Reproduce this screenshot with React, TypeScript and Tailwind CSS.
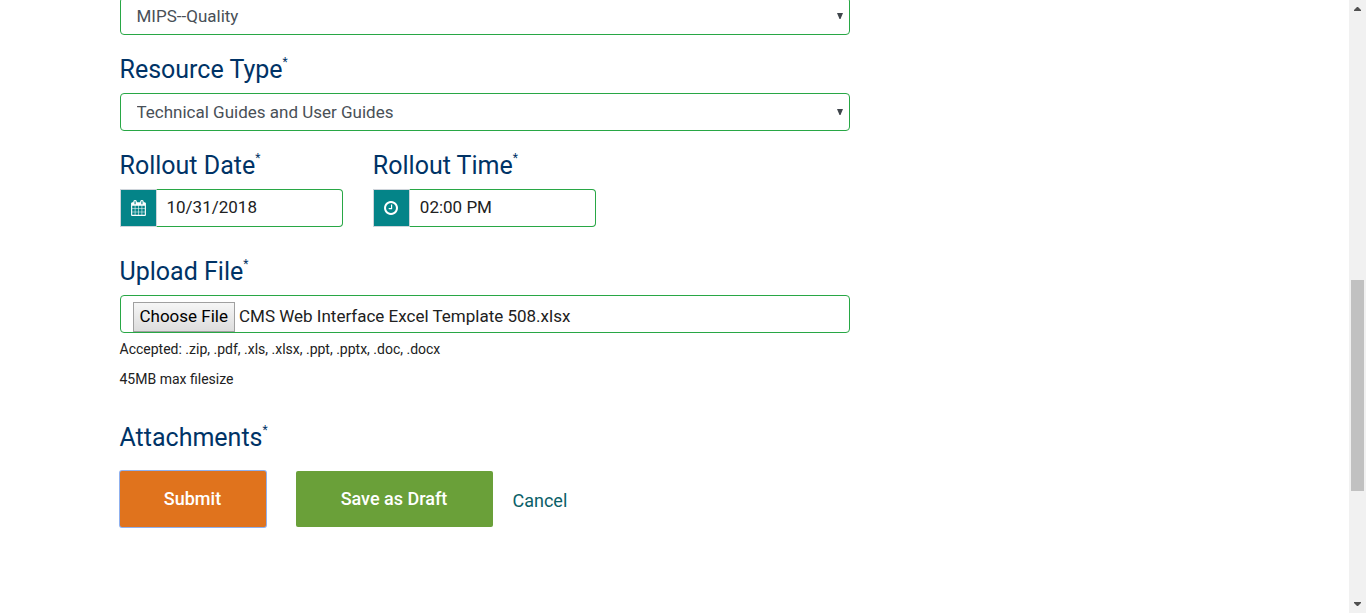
import { useEffect, useRef } from "react";
import type { ReactNode } from "react";

function FieldLabel({ htmlFor, children }: { htmlFor: string; children: ReactNode }) {
  return (
    <label htmlFor={htmlFor} className="mb-[5px] flex h-9 text-[25px] leading-9 text-[#003366]">
      <span>{children}</span>
      <span className="text-xs leading-5">*</span>
    </label>
  );
}

function SelectField({ id, label, value }: { id: string; label?: string; value: string }) {
  return (
    <div className="relative">
      <select
        id={id}
        aria-label={label}
        defaultValue={value}
        className="block h-[38px] w-full appearance-none rounded border border-[#28a745] bg-white px-4 pt-0.5 text-[17px] text-[#495057]"
      >
        <option>{value}</option>
      </select>
      <svg viewBox="0 0 6 6" className="pointer-events-none absolute top-4 right-[7px] h-1.5 w-1.5 fill-[#40464c]" aria-hidden="true">
        <path d="M0 0H6L3.5 6H2.5Z" />
      </svg>
    </div>
  );
}

function CalendarIcon() {
  return (
    <svg viewBox="0 0 1664 1792" className="h-4 w-[15px] fill-white" aria-hidden="true">
      <path d="M128 1664h288v-288h-288v288zM480 1664h320v-288h-320v288zM128 1312h288v-320h-288v320zM480 1312h320v-320h-320v320zM128 928h288v-288h-288v288zM864 1664h320v-288h-320v288zM480 928h320v-288h-320v288zM1248 1664h288v-288h-288v288zM864 1312h320v-320h-320v320zM512 448v-288q0-13-9.500-22.500t-22.500-9.500h-64q-13 0-22.500 9.500t-9.500 22.500v288q0 13 9.500 22.500t22.500 9.500h64q13 0 22.500-9.500t9.500-22.500zM1248 1312h288v-320h-288v320zM864 928h320v-288h-320v288zM1248 928h288v-288h-288v288zM1280 448v-288q0-13-9.500-22.500t-22.500-9.500h-64q-13 0-22.500 9.500t-9.500 22.500v288q0 13 9.500 22.500t22.500 9.500h64q13 0 22.500-9.500t9.500-22.500zM1664 384v1280q0 52-38 90t-90 38h-1408q-52 0-90-38t-38-90v-1280q0-52 38-90t90-38h128v-96q0-66 47-113t113-47h64q66 0 113 47t47 113v96h384v-96q0-66 47-113t113-47h64q66 0 113 47t47 113v96h128q52 0 90 38t38 90z" />
    </svg>
  );
}

function ClockIcon() {
  return (
    <svg viewBox="0 0 1536 1536" className="h-3.5 w-3.5 fill-white" aria-hidden="true">
      <path d="M896 416v448q0 14-9 23t-23 9h-320q-14 0-23-9t-9-23v-64q0-14 9-23t23-9h224v-352q0-14 9-23t23-9h64q14 0 23 9t9 23zM1312 768q0-148-73-273t-198-198-273-73-273 73-198 198-73 273 73 273 198 198 273 73 273-73 198-198 73-273zM1536 768q0 209-103 385.500t-279.500 279.500-385.500 103-385.500-103-279.500-279.500-103-385.500 103-385.500 279.500-279.500 385.500-103 385.500 103 279.500 279.500 103 385.500z" />
    </svg>
  );
}

function IconField({ id, label, value, icon }: { id: string; label: string; value: string; icon: ReactNode }) {
  return (
    <div className="min-w-0">
      <FieldLabel htmlFor={id}>{label}</FieldLabel>
      <div className="flex h-[38px]">
        <span className="flex w-9 shrink-0 items-center justify-center border border-r-0 border-[#ced4da] bg-[#048488]">{icon}</span>
        <input
          id={id}
          type="text"
          defaultValue={value}
          className="w-full min-w-0 rounded-r border border-[#28a745] border-l-[#ced4da] bg-white px-2.5 text-[17px] text-[#212121]"
        />
      </div>
    </div>
  );
}

function FileField() {
  const ref = useRef<HTMLInputElement>(null);
  useEffect(() => {
    if (!ref.current) return;
    const transfer = new DataTransfer();
    transfer.items.add(new File([""], "CMS Web Interface Excel Template 508.xlsx"));
    ref.current.files = transfer.files;
  }, []);
  return (
    <input
      ref={ref}
      id="upload-file"
      type="file"
      className="block h-[38px] w-full rounded border border-[#28a745] bg-white px-3 pt-1.5 text-[17px] text-[#212121] file:mr-1 file:h-[30px] file:border file:border-solid file:border-[#a0a0a0] file:bg-linear-to-b file:from-[#f6f6f6] file:to-[#dddddd] file:px-1.5 file:text-[17px] file:text-black"
    />
  );
}

function Scrollbar() {
  return (
    <div className="flex w-[17px] shrink-0 flex-col items-center bg-[#f1f1f1]" aria-hidden="true">
      <svg viewBox="0 0 17 17" className="h-[17px] w-[17px] fill-[#505050]">
        <path d="M5 11V10L8 7H9L12 10V11Z" />
      </svg>
      <div className="flex w-full flex-1 flex-col px-0.5">
        <div className="grow-[263]" />
        <div className="grow-[211] bg-[#c1c1c1]" />
        <div className="grow-[105]" />
      </div>
      <svg viewBox="0 0 17 17" className="h-[17px] w-[17px] fill-[#505050]">
        <path d="M5 6V7L8 10H9L12 7V6Z" />
      </svg>
    </div>
  );
}

export default function App() {
  return (
    <div className="flex h-screen overflow-hidden bg-white font-['Roboto','Liberation_Sans',sans-serif] text-[#212121]">
      <main className="min-w-0 flex-1 overflow-hidden">
        <div className="mx-auto max-w-[1110px]">
          <form className="-mt-[3px] max-w-[730px]" onSubmit={(event) => event.preventDefault()}>
            <SelectField id="category" label="Category" value="MIPS--Quality" />
            <div className="mt-[17px]">
              <FieldLabel htmlFor="resource-type">Resource Type</FieldLabel>
              <SelectField id="resource-type" value="Technical Guides and User Guides" />
            </div>
            <div className="mt-[17px] grid grid-cols-3 gap-[30px]">
              <IconField id="rollout-date" label="Rollout Date" value="10/31/2018" icon={<CalendarIcon />} />
              <IconField id="rollout-time" label="Rollout Time" value="02:00 PM" icon={<ClockIcon />} />
            </div>
            <div className="mt-[27px]">
              <FieldLabel htmlFor="upload-file">Upload File</FieldLabel>
              <FileField />
              <p className="mt-1 text-sm leading-6">Accepted: .zip, .pdf, .xls, .xlsx, .ppt, .pptx, .doc, .docx</p>
              <p className="mt-1.5 text-sm leading-6">45MB max filesize</p>
            </div>
            <h2 className="mt-[29px] flex h-9 text-[25px] leading-9 text-[#003366]">
              Attachments<span className="text-xs leading-5">*</span>
            </h2>
            <div className="mt-[15px] flex items-center">
              <button type="submit" className="h-14 w-[146px] rounded-xs bg-[#e0731d] text-lg font-medium text-white ring-1 ring-[#8fb0ee]">
                Submit
              </button>
              <button type="button" className="ml-[30px] h-14 w-[197px] rounded-xs bg-[#6aa039] text-lg font-medium text-white">
                Save as Draft
              </button>
              <a href="#cancel" className="ml-5 pt-1 text-lg text-[#0a6068]">Cancel</a>
            </div>
          </form>
        </div>
      </main>
      <Scrollbar />
    </div>
  );
}
